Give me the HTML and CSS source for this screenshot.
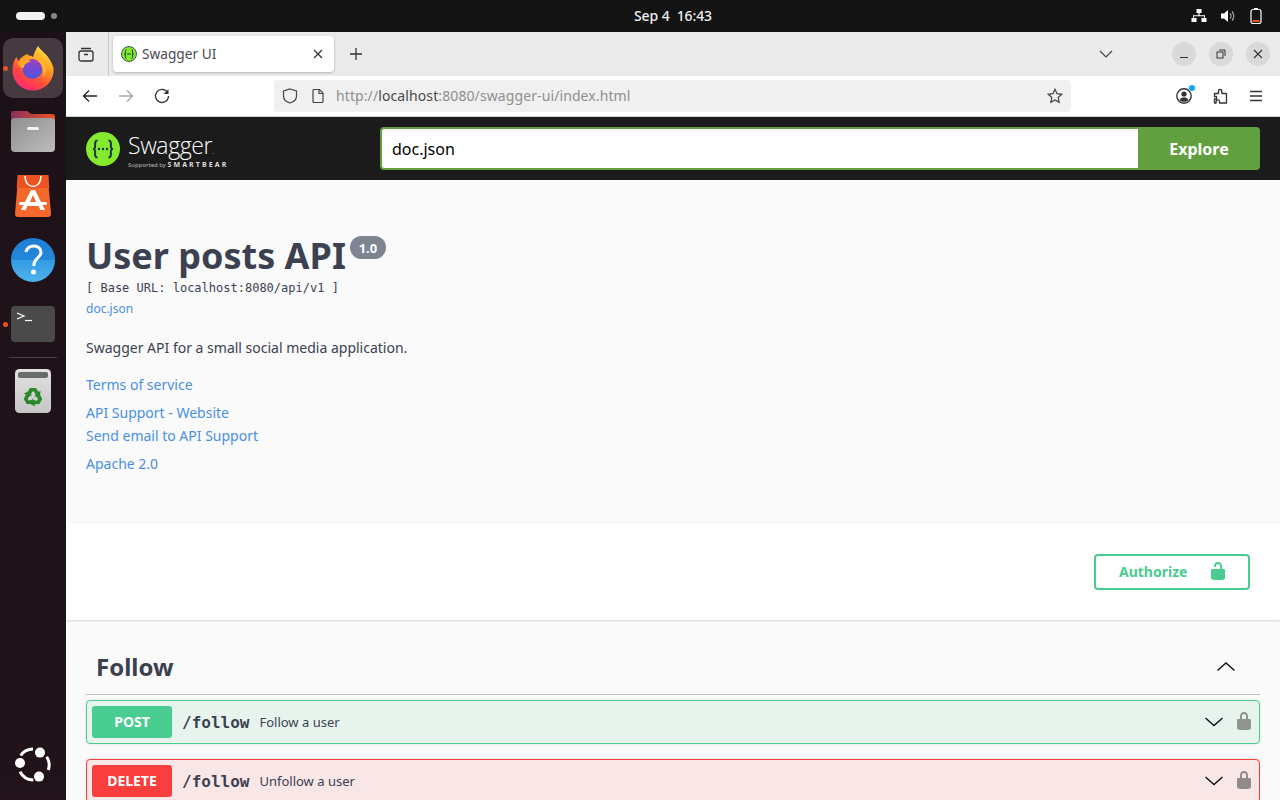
FILE: index.html
```html
<!DOCTYPE html>
<html lang="en">
<head>
<meta charset="utf-8">
<title>Swagger UI</title>
<link rel="stylesheet" href="styles.css">
</head>
<body>
<div class="desktop">
  <header class="panel">
    <div class="workspaces"><span class="ws-active"></span><span class="ws-dot"></span></div>
    <div class="clock">Sep 4&nbsp;&nbsp;16:43</div>
    <div class="tray">
      <svg class="tray-net" width="16" height="16" viewBox="0 0 16 16"><path fill="#fff" d="M5.500 1h5v4H8.600v2.200H14V10h1.500v4h-5v-4H13V8.200H3V10h2.500v4h-5v-4H2V7.200h5.400V5H5.500z"/></svg>
      <svg width="16" height="16" viewBox="0 0 16 16"><path fill="#fff" d="M1 5.500h3L8 2v12L4 10.500H1z"/><path fill="none" stroke="#aaa" stroke-width="1.100" d="M10 5.500a3.500 3.500 0 0 1 0 5M12 3.500a6.500 6.500 0 0 1 0 9"/></svg>
      <svg class="battery" width="12" height="16" viewBox="0 0 12 16"><rect x="1" y="1.500" width="10" height="14" rx="2" fill="none" stroke="#fff" stroke-width="1.200"/><rect x="4" y="0" width="4" height="1.500" fill="#fff"/><rect x="2.500" y="12" width="7" height="2" fill="#e95420"/></svg>
    </div>
  </header>
  <div class="workspace">
    <nav class="dock">
      <div class="dock-item selected">
        <span class="run-dot"></span>
        <svg width="44" height="46" viewBox="0 0 44 46">
          <defs>
            <linearGradient id="ffa" x1="0.850" y1="0.050" x2="0.300" y2="1"><stop offset="0" stop-color="#ffe847"/><stop offset="0.350" stop-color="#ffa21f"/><stop offset="0.700" stop-color="#ff4a3d"/><stop offset="1" stop-color="#ff2a78"/></linearGradient>
            <linearGradient id="ffb" x1="0.500" y1="0" x2="0.500" y2="1"><stop offset="0" stop-color="#a23fc4"/><stop offset="0.600" stop-color="#6a4cd4"/><stop offset="1" stop-color="#4e58d6"/></linearGradient>
            <linearGradient id="ffc" x1="0" y1="0" x2="1" y2="1"><stop offset="0" stop-color="#ff8a1f"/><stop offset="1" stop-color="#ffc52c"/></linearGradient>
          </defs>
          <path fill="url(#ffa)" d="M27 1C30 6 36 9 39 15c3 5 4 9 3.500 12C41.500 38 32 45.500 22 45.500 10 45.500 1.500 36 1.500 25c0-5 1.500-10 4-13 .5 1 1 3 2 4 2.500-4 6.500-6.500 9.500-7 0 3 2 3 5 3 1-4 3-8 5-11z"/>
          <circle cx="21.500" cy="24" r="10" fill="url(#ffb)"/>
          <path fill="#ffb52c" d="M22 12c7 0 13 6 13 13 0 3-1 6-3 8 1-5 0-12-4-16-2-2-4-3-6-5z"/>
          <path fill="url(#ffc)" d="M6.500 18c3-6 9-9 15-7-1 2-3 3-5 4 2 0 3 1 3 2-3 0-6 2-6.500 5-1 2-4 1-6.500-4z"/>
          <path fill="#ff4a4a" d="M6.500 22c1 8 7 13 15 13 4 0 8-1 11-4-3 4-7 6-12 6C13 37 7 31 6.500 22z"/>
        </svg>
      </div>
      <div class="dock-item">
        <svg width="46" height="42" viewBox="0 0 46 42">
          <defs><linearGradient id="fold" x1="0" y1="0" x2="1" y2="1"><stop offset="0" stop-color="#8f8f8f"/><stop offset="1" stop-color="#bdbdbd"/></linearGradient><linearGradient id="foldb" x1="0" y1="0" x2="1" y2="0"><stop offset="0" stop-color="#8c2f5f"/><stop offset="1" stop-color="#e95420"/></linearGradient></defs>
          <path fill="url(#foldb)" d="M1 20V3a3 3 0 0 1 3-3h13l4 3h21a3 3 0 0 1 3 3v14z"/>
          <rect x="1" y="7" width="44" height="34" rx="4" fill="url(#fold)"/>
          <rect x="17" y="16" width="12" height="3" rx="1.500" fill="#f2f2f2"/>
        </svg>
      </div>
      <div class="dock-item">
        <svg width="36" height="42" viewBox="0 0 36 42">
          <path fill="#f4682c" d="M3 3a3 3 0 0 1 3-3h24a3 3 0 0 1 3 3l3 36a3 3 0 0 1-3 3H3a3 3 0 0 1-3-3z"/>
          <path fill="#e95420" d="M2.500 0h31l.8 13H1.700z"/>
          <path fill="none" stroke="#fff" stroke-width="1.500" d="M10 1c0 14 16 14 16 0"/>
          <path fill="#fff" d="M16 15h4l10 20h-4.500l-2-4h-11l-2 4H6zm2 5-3 7h6z"/>
          <rect x="4" y="27" width="28" height="3" rx="1.500" fill="#fff"/>
        </svg>
      </div>
      <div class="dock-item">
        <svg width="44" height="44" viewBox="0 0 44 44">
          <defs><linearGradient id="help" x1="0" y1="0" x2="0" y2="1"><stop offset="0" stop-color="#1c7fd3"/><stop offset="0.500" stop-color="#2488da"/><stop offset="0.500" stop-color="#319be3"/><stop offset="1" stop-color="#4fb4ec"/></linearGradient></defs>
          <circle cx="22" cy="22" r="22" fill="url(#help)"/>
          <path fill="none" stroke="#fff" stroke-width="3" d="M15 14c1-4 4-6 8-6 4 0 7 3 7 6.500 0 5-7 6-7 12v1.500"/>
          <circle cx="22.500" cy="34" r="2.500" fill="#fff"/>
        </svg>
      </div>
      <div class="dock-item">
        <span class="run-dot"></span>
        <svg width="44" height="36" viewBox="0 0 44 36">
          <rect width="44" height="36" rx="4" fill="#4a4a4a"/>
          <path fill="none" stroke="#fff" stroke-width="1.200" d="M6 7l7 3-7 3"/>
          <path stroke="#fff" stroke-width="1.200" d="M14 14.500h7"/>
        </svg>
      </div>
      <div class="dock-sep"></div>
      <div class="dock-item">
        <svg class="trash" width="36" height="44" viewBox="0 0 36 44">
          <defs><linearGradient id="trash" x1="0" y1="0" x2="0" y2="1"><stop offset="0" stop-color="#e2e2e2"/><stop offset="1" stop-color="#c6c6c6"/></linearGradient></defs>
          <rect width="36" height="44" rx="4.500" fill="url(#trash)"/>
          <rect x="3" y="3" width="30" height="6" rx="2" fill="#6b6b6b"/>
          <g fill="#2a8a2a">
            <path d="M10.500 26.500 15 19h6l2.500 4 2-1.200-.5 6.500-6-1 2-1.200-2-3.600h-1.500l-3 5z"/>
            <path transform="rotate(120 18 28)" d="M10.500 26.500 15 19h6l2.500 4 2-1.200-.5 6.500-6-1 2-1.200-2-3.600h-1.500l-3 5z"/>
            <path transform="rotate(240 18 28)" d="M10.500 26.500 15 19h6l2.500 4 2-1.200-.5 6.500-6-1 2-1.200-2-3.600h-1.500l-3 5z"/>
          </g>
        </svg>
      </div>
      <div class="dock-item dock-bottom">
        <svg width="36" height="36" viewBox="0 0 36 36">
          <g fill="none" stroke="#fff" stroke-width="3"><path d="M5.700 9.500A15.500 15.500 0 0 1 18 3"/><path d="M31.700 10.700A15.500 15.500 0 0 1 33.300 24"/><path d="M5 25.700A15.500 15.500 0 0 0 18.300 34"/></g>
          <circle cx="25" cy="6.600" r="5" fill="#fff"/><circle cx="5" cy="17" r="5" fill="#fff"/><circle cx="24" cy="30.600" r="5" fill="#fff"/>
        </svg>
      </div>
    </nav>
    <main class="browser">
      <div class="tabbar">
        <div class="tab-tools">
          <svg width="16" height="16" viewBox="0 0 16 16" fill="none" stroke="#333" stroke-width="1.300"><rect x="1" y="5" width="14" height="10" rx="2"/><path d="M3 2.500h10M6 8.500h4"/></svg>
        </div>
        <div class="tab">
          <svg class="favicon" width="16" height="16" viewBox="0 0 16 16"><circle cx="8" cy="8" r="7.500" fill="#85ea2d" stroke="#173647" stroke-width=".8"/><path fill="none" stroke="#173647" stroke-width="1" d="M5.500 3.500C4 3.500 4.500 5.500 4.500 7c0 .6-.5 1-1 1 .5 0 1 .4 1 1 0 1.500-.5 3.500 1 3.500M10.500 3.500c1.500 0 1 2 1 3.500 0 .6.500 1 1 1-.5 0-1 .4-1 1 0 1.500.5 3.500-1 3.500M6 8h4"/></svg>
          <span class="tab-title">Swagger UI</span>
          <svg class="tab-close" width="10" height="10" viewBox="0 0 10 10"><path stroke="#333" stroke-width="1.300" d="M1 1l8 8M9 1l-8 8"/></svg>
        </div>
        <svg class="new-tab" width="14" height="14" viewBox="0 0 14 14"><path stroke="#333" stroke-width="1.300" d="M7 1v12M1 7h12"/></svg>
        <svg class="tab-list" width="14" height="8" viewBox="0 0 14 8"><path fill="none" stroke="#444" stroke-width="1.200" d="M1 1l6 6 6-6"/></svg>
        <div class="win-controls">
          <span class="win-btn"><svg width="10" height="10" viewBox="0 0 10 10"><path stroke="#333" d="M1 8.500h8"/></svg></span>
          <span class="win-btn"><svg width="10" height="10" viewBox="0 0 10 10" fill="none" stroke="#333"><rect x="1" y="3" width="6" height="6"/><path d="M3 1h6v6"/></svg></span>
          <span class="win-btn"><svg width="10" height="10" viewBox="0 0 10 10"><path stroke="#333" stroke-width="1.100" d="M1 1l8 8M9 1l-8 8"/></svg></span>
        </div>
      </div>
      <div class="navbar">
        <svg class="nav-icon" width="16" height="16" viewBox="0 0 16 16" fill="none" stroke="#222" stroke-width="1.300"><path d="M15 8H1.500M7 2.500L1.500 8 7 13.500"/></svg>
        <svg class="nav-icon" width="16" height="16" viewBox="0 0 16 16" fill="none" stroke="#a8a8a8" stroke-width="1.300"><path d="M1 8h13.500M9 2.500L14.500 8 9 13.500"/></svg>
        <svg class="nav-icon" width="16" height="16" viewBox="0 0 16 16" fill="none" stroke="#333" stroke-width="1.300"><path d="M13.500 4.500A6.500 6.500 0 1 0 14.500 8"/><path fill="#333" stroke="none" d="M14.500 1v5h-5z"/></svg>
        <div class="urlbar">
          <svg width="16" height="16" viewBox="0 0 16 16" fill="none" stroke="#444" stroke-width="1.200"><path d="M8 1l6.500 2v5c0 3.500-3 6-6.500 7-3.500-1-6.500-3.500-6.500-7V3z"/></svg>
          <svg class="page-icon" width="14" height="16" viewBox="0 0 14 16" fill="none" stroke="#444" stroke-width="1.200"><path d="M2 2.500a1 1 0 0 1 1-1h5.500L12 5v8.500a1 1 0 0 1-1 1H3a1 1 0 0 1-1-1z"/><path d="M8 1.500V5.500h4" /></svg>
          <span class="url"><span class="url-dim">http://</span><span class="url-host">localhost</span><span class="url-dim">:8080/swagger-ui/index.html</span></span>
          <svg class="star" width="16" height="16" viewBox="0 0 16 16" fill="none" stroke="#444" stroke-width="1.200"><path d="M8 1.300l2 4.400 4.700.6-3.500 3.200 1 4.800L8 11.900l-4.200 2.400 1-4.800L1.300 6.300 6 5.700z"/></svg>
        </div>
        <div class="nav-right">
          <span class="account">
            <svg width="16" height="16" viewBox="0 0 16 16"><circle cx="8" cy="8" r="7.200" fill="none" stroke="#333" stroke-width="1.400"/><circle cx="8" cy="6" r="2.600" fill="#333"/><path fill="#333" d="M3.500 12c1-2 2.500-2.500 4.500-2.500s3.500.5 4.500 2.500c-1 1-2.500 1.800-4.500 1.800S4.500 13 3.500 12z"/></svg>
            <span class="badge-dot"></span>
          </span>
          <svg width="16" height="16" viewBox="0 0 16 16" fill="none" stroke="#333" stroke-width="1.300" stroke-linejoin="round"><path d="M2.500 5.500H6.500V3.200a1.700 1.700 0 0 1 3.400 0V5.500H14.500V15H7.500V13.500a1.700 1.700 0 0 0-3.400 0V15H2.500V11H4.500V8.500H2.500z"/></svg>
          <svg class="menu-icon" width="14" height="12" viewBox="0 0 14 12"><path stroke="#333" stroke-width="1.300" d="M1 1.500h12M1 6h12M1 10.500h12"/></svg>
        </div>
      </div>
      <div class="page">
        <section class="sw-topbar">
          <div class="sw-logo">
            <svg width="34" height="34" viewBox="0 0 34 34"><circle cx="17" cy="17" r="17" fill="#85ea2d"/><path fill="none" stroke="#173647" stroke-width="2" d="M11.500 8.500c-3.500 0-2 4.500-2.500 7-.2 1-1 1.500-2 1.500 1 0 1.800.5 2 1.500.5 2.500-1 7 2.500 7M22.500 8.500c3.500 0 2 4.500 2.500 7 .2 1 1 1.500 2 1.500-1 0-1.800.5-2 1.500-.5 2.500 1 7-2.500 7"/><circle cx="13" cy="17" r="1.200" fill="#173647"/><circle cx="17" cy="17" r="1.200" fill="#173647"/><circle cx="21" cy="17" r="1.200" fill="#173647"/></svg>
            <div class="sw-word">
              <div class="sw-name">Swagger<span class="sw-tm">.</span></div>
              <div class="sw-sub">Supported by <b>SMARTBEAR</b></div>
            </div>
          </div>
          <div class="sw-search">
            <div class="sw-input">doc.json</div>
            <div class="sw-explore">Explore</div>
          </div>
        </section>
        <section class="info">
          <div class="title-row"><h1 class="title">User posts API</h1><span class="version">1.0</span></div>
          <div class="base-url">[ Base URL: localhost:8080/api/v1 ]</div>
          <a class="link small">doc.json</a>
          <p class="desc">Swagger API for a small social media application.</p>
          <a class="link terms">Terms of service</a>
          <a class="link support">API Support - Website</a>
          <a class="link email">Send email to API Support</a>
          <a class="link license">Apache 2.0</a>
        </section>
        <section class="scheme">
          <div class="authorize">
            <span>Authorize</span>
            <svg width="20" height="20" viewBox="0 0 20 20"><path fill="#49cc90" d="M15.800 8H14V5.600C14 2.703 12.665 1 10 1 7.334 1 6 2.703 6 5.600V6h2v-.801C8 3.754 8.797 3 10 3c1.203 0 2 .754 2 2.199V8H4c-.553 0-1 .646-1 1.199V17c0 .549.428 1.139.951 1.307l1.197.387C5.672 18.861 6.450 19 7 19h6c.550 0 1.328-.139 1.852-.307l1.197-.387c.523-.167.951-.757.951-1.306V9.199C17 8.646 16.352 8 15.800 8z"/></svg>
          </div>
        </section>
        <section class="ops">
          <div class="tag-head">
            <h3 class="tag-name">Follow</h3>
            <svg class="tag-arrow" width="20" height="20" viewBox="0 0 20 20"><path fill="none" stroke="#111" stroke-width="1.400" d="M1.500 14.500 10 7l8.500 7.500"/></svg>
          </div>
          <div class="op op-post">
            <span class="method">POST</span>
            <span class="path">/follow</span>
            <span class="summary">Follow a user</span>
            <svg class="op-arrow" width="20" height="20" viewBox="0 0 20 20"><path fill="none" stroke="#111" stroke-width="1.400" d="M1.500 6 10 13.500 18.500 6"/></svg>
            <svg class="op-lock" width="20" height="20" viewBox="0 0 20 20"><path fill="#8f9490" d="M15.800 8H14V5.600C14 2.703 12.665 1 10 1 7.334 1 6 2.703 6 5.600V8H4c-.553 0-1 .646-1 1.199V17c0 .549.428 1.139.951 1.307l1.197.387C5.672 18.861 6.450 19 7 19h6c.550 0 1.328-.139 1.852-.307l1.197-.387c.523-.167.951-.757.951-1.306V9.199C17 8.646 16.352 8 15.800 8zM12 8H8V5.199C8 3.754 8.797 3 10 3c1.203 0 2 .754 2 2.199V8z"/></svg>
          </div>
          <div class="op op-delete">
            <span class="method">DELETE</span>
            <span class="path">/follow</span>
            <span class="summary">Unfollow a user</span>
            <svg class="op-arrow" width="20" height="20" viewBox="0 0 20 20"><path fill="none" stroke="#111" stroke-width="1.400" d="M1.500 6 10 13.500 18.500 6"/></svg>
            <svg class="op-lock" width="20" height="20" viewBox="0 0 20 20"><path fill="#938b8b" d="M15.800 8H14V5.600C14 2.703 12.665 1 10 1 7.334 1 6 2.703 6 5.600V8H4c-.553 0-1 .646-1 1.199V17c0 .549.428 1.139.951 1.307l1.197.387C5.672 18.861 6.450 19 7 19h6c.550 0 1.328-.139 1.852-.307l1.197-.387c.523-.167.951-.757.951-1.306V9.199C17 8.646 16.352 8 15.800 8zM12 8H8V5.199C8 3.754 8.797 3 10 3c1.203 0 2 .754 2 2.199V8z"/></svg>
          </div>
        </section>
      </div>
    </main>
  </div>
</div>
</body>
</html>
```
FILE: styles.css
```css
* { box-sizing: border-box; }
html, body { margin: 0; height: 100%; overflow: hidden; }
body { font-family: "Noto Sans", sans-serif; color: #3b4151; background: #fff; }
svg { display: block; flex: none; }
.desktop { height: 800px; display: flex; flex-direction: column; }

.panel { height: 32px; background: #131313; display: grid; grid-template-columns: 1fr auto 1fr; align-items: center; padding: 0 16px; flex: none; }
.workspaces { display: flex; align-items: center; gap: 6px; }
.ws-active { width: 29px; height: 8px; border-radius: 4px; background: #f2f2f2; }
.ws-dot { width: 6px; height: 6px; border-radius: 50%; background: #8a8a8a; }
.clock { color: #eee; font-size: 14px; font-weight: 500; letter-spacing: -0.1px; padding: 0 0 2px 66px; }
.tray { display: flex; justify-content: flex-end; align-items: center; gap: 14px; padding-right: 2px; }
.tray-net { margin-right: -1px; }

.workspace { flex: 1; min-height: 0; display: flex; }
.dock { width: 66px; flex: none; background: linear-gradient(#1d1118, #22131b); display: flex; flex-direction: column; padding: 4px 0 4px; }
.dock-item { height: 64px; flex: none; display: flex; align-items: center; justify-content: center; position: relative; }
.dock-item.selected::before { content: ""; position: absolute; left: 3px; right: 3px; top: 2px; bottom: 2px; border-radius: 10px; background: #463a40; }
.dock-item svg { position: relative; }
.trash { margin-top: 2px; }
.run-dot { position: absolute; left: 3px; top: 50%; margin-top: -2.500px; width: 5px; height: 5px; border-radius: 50%; background: #e95420; z-index: 1; }
.dock-sep { height: 1px; margin: 1px 9px 0; background: #4a3e44; flex: none; }
.dock-bottom { margin-top: auto; }

.browser { flex: 1; min-width: 0; display: flex; flex-direction: column; background: #fff; }
.tabbar { height: 44px; flex: none; background: #ebebeb; display: flex; align-items: center; }
.tab-tools { width: 43px; height: 44px; display: flex; align-items: center; justify-content: center; border-right: 1px solid #c9c9c9; padding-right: 2px; }
.tab { width: 221px; height: 36px; margin-left: 4px; background: #fff; border-radius: 4px; box-shadow: 0 1px 3px rgba(0,0,0,.25); display: flex; align-items: center; padding: 0 11px 0 8px; }
.favicon { margin-right: 5px; }
.tab-title { flex: 1; font-size: 13.700px; color: #4a4a52; padding-bottom: 2px; }
.new-tab { margin-left: 15px; }
.tab-list { margin-left: auto; }
.win-controls { display: flex; gap: 13px; margin: 0 10px 0 59px; }
.win-btn { width: 24px; height: 24px; border-radius: 50%; background: #d9d9d9; display: flex; align-items: center; justify-content: center; }

.navbar { height: 41px; flex: none; background: #fff; display: flex; align-items: center; padding: 0 17px 0 16px; border-bottom: 1px solid #d0d0d0; }
.nav-icon { margin-right: 20px; }
.navbar .nav-icon + .urlbar { margin-left: 84px; }
.urlbar { width: 797px; height: 32px; background: #f0f0f0; border-radius: 4px; display: flex; align-items: center; padding: 0 8px; }
.page-icon { margin-left: 13px; }
.url { margin-left: 11px; font-size: 14px; color: #8f8f8f; flex: 1; letter-spacing: 0.1px; padding-bottom: 2px; }
.url-host { color: #4a4a4a; }
.nav-right { display: flex; align-items: center; gap: 20px; margin-left: auto; }
.account { position: relative; display: block; }
.menu-icon { margin-left: 1px; }
.badge-dot { position: absolute; right: -3px; top: -3px; width: 6px; height: 6px; border-radius: 50%; background: #10a5ff; }

.page { flex: 1; min-height: 0; overflow: hidden; background: #fff; }
.sw-topbar { height: 63px; background: #1b1b1b; display: flex; align-items: center; padding: 0 20px; }
.sw-logo { display: flex; align-items: center; gap: 8px; width: 294px; }
.sw-word { color: #fff; display: flex; flex-direction: column; padding-top: 6px; }
.sw-name { font-family: "Open Sans", sans-serif; font-size: 23px; font-weight: 300; line-height: 24px; letter-spacing: -0.4px; }
.sw-tm { font-size: 8px; }
.sw-sub { font-size: 6px; line-height: 9px; color: #bbb; margin-top: -2.500px; white-space: nowrap; }
.sw-sub b { font-size: 7px; letter-spacing: 2.100px; color: #ddd; }
.sw-search { flex: 1; display: flex; height: 43px; }
.sw-input { flex: 1; background: #fff; border: 2px solid #62a03f; border-right: none; border-radius: 4px 0 0 4px; font-size: 16px; color: #000; padding-left: 10px; display: flex; align-items: center; }
.sw-explore { width: 122px; background: #62a03f; color: #fff; font-size: 16px; font-weight: 700; border-radius: 0 4px 4px 0; display: flex; align-items: center; justify-content: center; }

.info { height: 344px; background: #fafafa; padding: 51px 20px 0; display: flex; flex-direction: column; align-items: flex-start; }
.title-row { display: flex; align-items: flex-start; }
.title { margin: 0; font-size: 36px; font-weight: 700; line-height: 50px; color: #3b4151; }
.version { margin: 5px 0 0 4px; height: 23px; width: 36px; background: #7d8492; color: #fff; border-radius: 12px; font-size: 13px; font-weight: 700; display: flex; align-items: center; justify-content: center; }
.base-url { font-family: "DejaVu Sans Mono", monospace; font-size: 12px; line-height: 16px; margin-top: -1px; color: #3b4151; }
.link { color: #4990e2; font-size: 14px; line-height: 19px; }
.small { font-size: 12px; line-height: 17px; margin-top: 4px; }
.desc { margin: 21px 0 0; font-size: 14px; line-height: 19px; color: #3b4151; }
.terms { margin-top: 18px; }
.support { margin-top: 9px; }
.email { margin-top: 4px; }
.license { margin-top: 9px; }

.scheme { height: 96px; background: #fff; box-shadow: 0 1px 2px rgba(0,0,0,.15); position: relative; display: flex; justify-content: flex-end; padding: 30px 30px 0 0; }
.authorize { width: 156px; height: 36px; border: 2px solid #49cc90; border-radius: 4px; color: #49cc90; font-size: 14px; font-weight: 700; display: flex; align-items: center; justify-content: space-between; padding: 0 20px 2px 23px; }

.ops { background: #fafafa; padding: 0 20px; height: 180px; }
.tag-head { height: 75px; display: flex; align-items: center; justify-content: space-between; padding: 19px 24px 0 10px; border-bottom: 1px solid rgba(59,65,81,.3); }
.tag-name { margin: 0; font-size: 24px; font-weight: 700; color: #3b4151; }
.tag-arrow { margin-bottom: 2px; }
.op { height: 44px; margin-top: 5px; border: 1px solid; border-radius: 4px; display: flex; align-items: center; padding: 0 5px; box-shadow: 0 0 3px rgba(0,0,0,.1); }
.op + .op { margin-top: 15px; }
.op-post { background: #e7f4ee; border-color: #49cc90; }
.op-delete { background: #f9e6e6; border-color: #f93e3e; }
.method { width: 80px; height: 32px; border-radius: 3px; color: #fff; font-size: 14px; font-weight: 700; display: flex; align-items: center; justify-content: center; padding-bottom: 2px; }
.op-post .method { background: #49cc90; }
.op-delete .method { background: #f93e3e; }
.path { font-family: "DejaVu Sans Mono", monospace; font-size: 16px; font-weight: 700; margin-left: 10px; color: #3b4151; }
.summary { font-size: 13px; margin-left: 10px; color: #3b4151; flex: 1; }
.op-arrow { margin-right: 10px; }
.op-lock { margin-bottom: 2px; }
```
